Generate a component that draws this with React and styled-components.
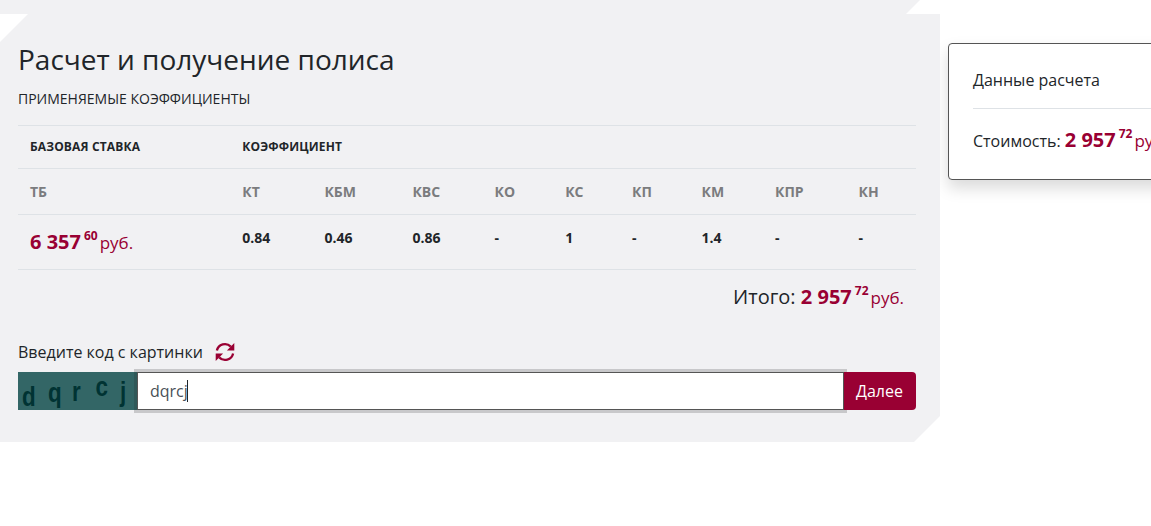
import React, { useState } from 'react';
import styled, { createGlobalStyle } from 'styled-components';

const ACCENT = '#990033';

const columns = [
  { name: 'КТ', value: '0.84' },
  { name: 'КБМ', value: '0.46' },
  { name: 'КВС', value: '0.86' },
  { name: 'КО', value: '-' },
  { name: 'КС', value: '1' },
  { name: 'КП', value: '-' },
  { name: 'КМ', value: '1.4' },
  { name: 'КПР', value: '-' },
  { name: 'КН', value: '-' },
];

const captcha = [
  { char: 'd', x: 4, y: 33.5 },
  { char: 'q', x: 30, y: 30 },
  { char: 'r', x: 54, y: 28.5 },
  { char: 'c', x: 77.5, y: 23.5 },
  { char: 'j', x: 102, y: 29 },
];

function Price({ rub, kop }) {
  return (
    <PriceText>
      <b>{rub}</b>
      <sup>{kop}</sup>
      <span>руб.</span>
    </PriceText>
  );
}

function Captcha() {
  return (
    <CaptchaImage width="120" height="38" viewBox="0 0 120 38">
      {captcha.map(({ char, x, y }) => (
        <text key={char} transform={`translate(${x} ${y}) scale(0.8 1)`}>
          {char}
        </text>
      ))}
    </CaptchaImage>
  );
}

function RefreshIcon() {
  return (
    <svg width="20" height="20" viewBox="0 0 20 20">
      <path d="M1.9 8.6A8.2 8.2 0 0 1 15.8 4.6M18.1 11.4A8.2 8.2 0 0 1 4.2 15.4" fill="none" stroke="currentColor" strokeWidth="2.3" />
      <path d="M19.3 1v7.6h-7.4zM.7 19v-7.6h7.4z" fill="currentColor" />
    </svg>
  );
}

export default function App() {
  const [code, setCode] = useState('dqrcj');

  return (
    <Page>
      <GlobalStyle />
      <Main>
        <PreviousPanel />
        <Panel>
          <Title>Расчет и получение полиса</Title>
          <Subtitle>Применяемые коэффициенты</Subtitle>
          <Table>
            <HeadRow>
              <div>Базовая ставка</div>
              <div>Коэффициент</div>
            </HeadRow>
            <NameRow>
              <div>ТБ</div>
              {columns.map((e) => (
                <div key={e.name}>{e.name}</div>
              ))}
            </NameRow>
            <ValueRow>
              <RateCell>
                <Price rub="6 357" kop="60" />
              </RateCell>
              {columns.map((e) => (
                <div key={e.name}>{e.value}</div>
              ))}
            </ValueRow>
          </Table>
          <Total>
            Итого: <Price rub="2 957" kop="72" />
          </Total>
          <CodeLabel>
            Введите код с картинки
            <RefreshIcon />
          </CodeLabel>
          <InputGroup>
            <Captcha />
            <Field>
              <CodeInput value={code} size={1} onChange={(e) => setCode(e.target.value)} />
              <Caret />
            </Field>
            <Button type="button">Далее</Button>
          </InputGroup>
        </Panel>
      </Main>
      <Card>
        <CardTitle>Данные расчета</CardTitle>
        <CardCost>
          Стоимость: <Price rub="2 957" kop="72" />
        </CardCost>
      </Card>
    </Page>
  );
}

const GlobalStyle = createGlobalStyle`
  * {
    box-sizing: border-box;
  }

  body {
    margin: 0;
    overflow: hidden;
    background: #fff;
    color: #212529;
    font: 16px/24px 'Open Sans', 'Liberation Sans', sans-serif;
  }
`;

const Page = styled.div`
  display: flex;
  align-items: flex-start;
  width: 1151px;
  height: 526px;
  overflow: hidden;
`;

const Main = styled.div`
  flex: none;
  width: 940px;
`;

const PreviousPanel = styled.div`
  height: 14px;
  background: #f1f1f3;
  clip-path: polygon(0 0, 920px 0, 906px 100%, 0 100%);
`;

const Panel = styled.div`
  height: 428px;
  padding: 28px 24px 0 18px;
  background: #f1f1f3;
  clip-path: polygon(28px 0, 100% 0, 100% 402px, 914px 100%, 0 100%, 0 28px);
`;

const Title = styled.h1`
  margin: 0;
  font-size: 28px;
  font-weight: 400;
  line-height: 34px;
`;

const Subtitle = styled.div`
  margin-top: 12px;
  font-size: 14px;
  line-height: 21px;
  text-transform: uppercase;
`;

const Table = styled.div`
  margin-top: 16px;
  border-bottom: 1px solid #dee2e6;
  font-weight: 700;
`;

const Row = styled.div`
  display: grid;
  grid-template-columns: 212.3px 82.1px 88px 82.2px 70.6px 66.8px 69.5px 73.5px 83.5px 1fr;
  padding-left: 12px;
  border-top: 1px solid #dee2e6;
  font-size: 14px;
`;

const HeadRow = styled(Row)`
  height: 43px;
  padding-top: 9px;
  font-size: 12px;
  letter-spacing: 0.15px;
  text-transform: uppercase;

  div {
    white-space: nowrap;
  }
`;

const NameRow = styled(Row)`
  height: 46px;
  padding-top: 11px;
  color: #7b7c7e;
`;

const ValueRow = styled(Row)`
  height: 55px;
  padding-top: 11px;
`;

const RateCell = styled.div`
  padding-top: 1px;
`;

const PriceText = styled.span`
  color: ${ACCENT};
  font-size: 17px;
  font-weight: 400;
  line-height: 30px;
  white-space: nowrap;

  b {
    font-size: 20px;
  }

  sup {
    position: relative;
    top: -9px;
    margin: 0 2px 0 3px;
    font-size: 12px;
    font-weight: 700;
    line-height: 0;
    vertical-align: baseline;
  }
`;

const Total = styled.div`
  margin-top: 12px;
  padding-right: 12px;
  font-size: 20px;
  line-height: 30px;
  text-align: right;
`;

const CodeLabel = styled.div`
  display: flex;
  align-items: center;
  gap: 12px;
  margin-top: 27px;

  svg {
    color: ${ACCENT};
  }
`;

const InputGroup = styled.div`
  display: flex;
  height: 38px;
  margin-top: 8px;
`;

const CaptchaImage = styled.svg`
  flex: none;
  background: #336666;

  text {
    fill: #003333;
    font: 700 28px 'Liberation Sans', sans-serif;
  }
`;

const Field = styled.div`
  position: relative;
  flex: 1;
  margin-left: -1px;
  box-shadow: 0 0 0 3px rgba(40, 40, 40, 0.2);
`;

const CodeInput = styled.input`
  width: 100%;
  height: 38px;
  padding: 6px 12px;
  border: 1px solid #555;
  border-radius: 0;
  outline: none;
  background: #fff;
  color: #495057;
  font: inherit;
`;

const Caret = styled.span`
  position: absolute;
  top: 8px;
  left: 50px;
  width: 1px;
  height: 22px;
  background: #212529;
`;

const Button = styled.button`
  position: relative;
  flex: none;
  width: 72px;
  padding: 0 1px 0 0;
  border: 0;
  border-radius: 0 4px 4px 0;
  background: ${ACCENT};
  color: #fff;
  font: inherit;
`;

const Card = styled.div`
  flex: none;
  width: 260px;
  height: 137px;
  margin: 43px 0 0 8px;
  padding: 24px;
  border: 1px solid #555;
  border-radius: 4px;
  background: #fff;
  box-shadow: 0 8px 16px rgba(0, 0, 0, 0.15);
`;

const CardTitle = styled.div`
  height: 41px;
  border-bottom: 1px solid #dee2e6;
`;

const CardCost = styled.div`
  margin-top: 16px;
  line-height: 30px;
  white-space: nowrap;
`;
